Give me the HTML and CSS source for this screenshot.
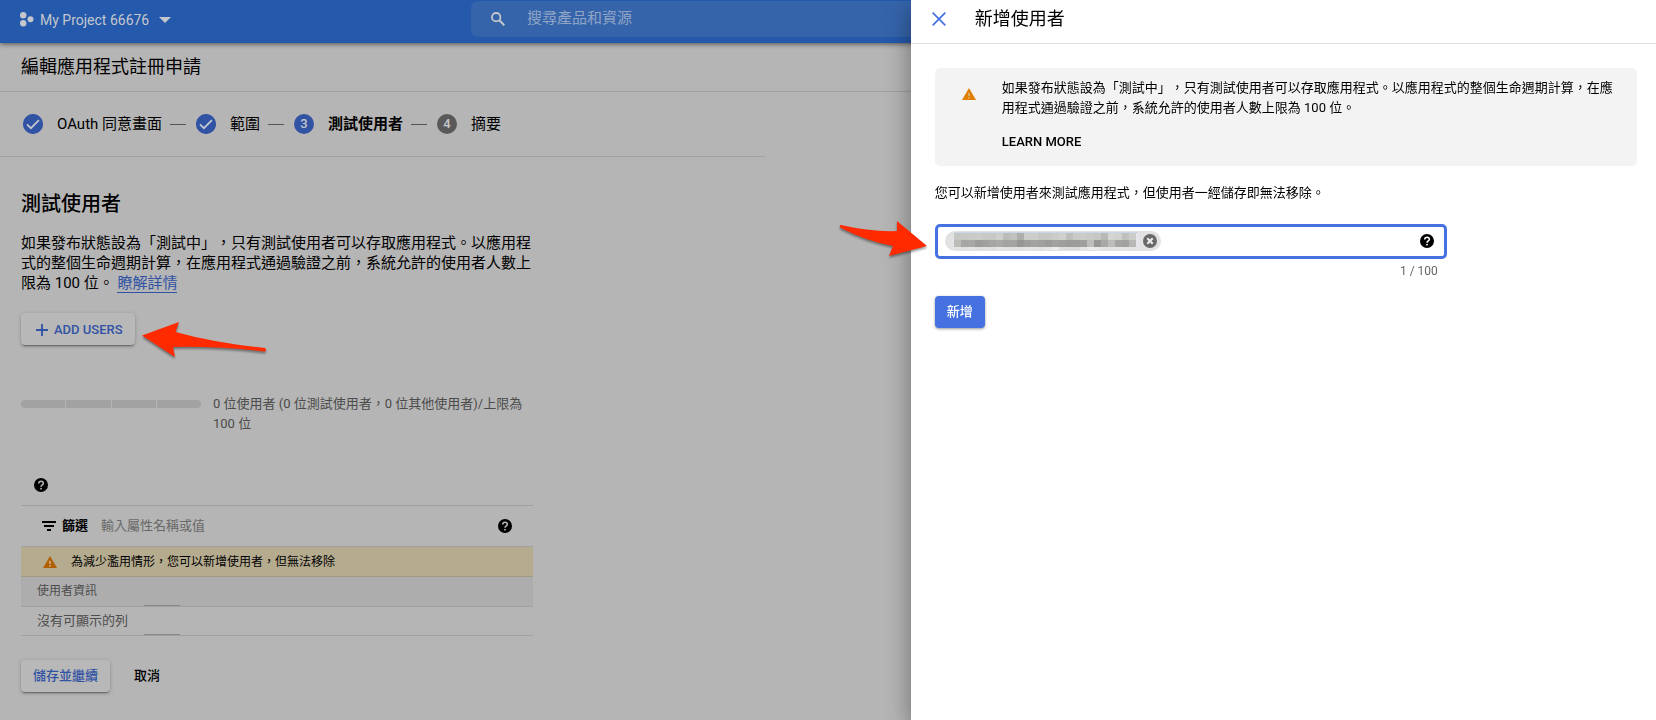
FILE: index.html
```html
<!DOCTYPE html>
<html lang="zh-Hant">
<head>
<meta charset="utf-8">
<meta name="viewport" content="width=device-width, initial-scale=1">
<title>編輯應用程式註冊申請</title>
<link rel="stylesheet" href="styles.css">
</head>
<body>
<svg class="defs" aria-hidden="true">
  <symbol id="help" viewBox="0 0 14 14"><circle cx="7" cy="7" r="7" fill="#000"/><path d="M4.700 5.500C4.700 4 5.700 3.300 7 3.300S9.300 4.100 9.300 5.400C9.300 6.900 7 7 7 8.800" fill="none" stroke="currentColor" stroke-width="1.600"/><rect x="6.200" y="9.900" width="1.600" height="1.600" fill="currentColor"/></symbol>
  <symbol id="warn" viewBox="0 0 14 12"><path d="M7 0 14 12H0z" fill="currentColor"/><path d="M7 4.800v3.200M7 9v1.400" class="warn-mark" stroke-width="1.300"/></symbol>
  <symbol id="check" viewBox="0 0 20 20"><circle cx="10" cy="10" r="10" fill="#3153a4"/><path d="m4 10.300 3.900 3.900 8-8" fill="none" stroke="#c4c8d2" stroke-width="1.700"/></symbol>
</svg>

<header class="topbar">
  <button class="project" type="button">
    <svg width="14" height="15" viewBox="0 0 14 15" fill="currentColor"><circle cx="3.200" cy="3.200" r="3.200"/><circle cx="3.200" cy="11.300" r="3.200"/><circle cx="10.500" cy="7.300" r="3"/></svg>
    <span>My Project 66676</span>
    <svg class="caret" width="12" height="6" viewBox="0 0 12 6" fill="currentColor"><path d="M0 0h12L6 6z"/></svg>
  </button>
  <label class="search">
    <svg width="14" height="14" viewBox="0 0 14 14" fill="none" stroke="currentColor"><circle cx="5.200" cy="5.200" r="4.200" stroke-width="1.800"/><path d="m8.300 8.300 5 5" stroke-width="2"/></svg>
    <input type="search" placeholder="搜尋產品和資源" aria-label="搜尋產品和資源">
  </label>
</header>

<main>
  <div class="page-title"><h1>編輯應用程式註冊申請</h1></div>
  <ol class="stepper">
    <li><svg class="dot"><use href="#check"/></svg><span>OAuth 同意畫面</span></li>
    <li><svg class="dot"><use href="#check"/></svg><span>範圍</span></li>
    <li class="current" aria-current="step"><b class="dot">3</b><span>測試使用者</span></li>
    <li class="next"><b class="dot">4</b><span>摘要</span></li>
  </ol>

  <section class="content">
    <h2>測試使用者</h2>
    <p class="intro">如果發布狀態設為「測試中」，只有測試使用者可以存取應用程式。以應用程式的整個生命週期計算，在應用程式通過驗證之前，系統允許的使用者人數上限為 100 位。 <a href="#details">瞭解詳情</a></p>
    <div class="anchor">
      <button class="raised add-users" type="button">
        <svg width="12" height="12" viewBox="0 0 12 12" stroke="currentColor" stroke-width="1.800"><path d="M6 0v12M0 6h12"/></svg>ADD USERS
      </button>
      <svg class="arrow arrow-left" width="130" height="40" viewBox="0 0 130 40" aria-hidden="true"><path d="M2 15.500 39 2 35.500 12Q75 23 125 28Q127 29.500 125 31.500Q75 26 33 27L35 37Z"/></svg>
    </div>

    <div class="quota">
      <div class="meter" role="img" aria-label="0 / 100"><i></i><i></i><i></i><i></i></div>
      <p>0 位使用者 (0 位測試使用者，0 位其他使用者)/上限為 100 位</p>
    </div>

    <div class="table-tools"><button class="icon" type="button" aria-label="說明"><svg width="14" height="14"><use href="#help"/></svg></button></div>
    <div class="filter">
      <svg width="14" height="10" viewBox="0 0 14 10" stroke="currentColor" stroke-width="1.800"><path d="M0 1h14M2 5h10M5 9h4"/></svg>
      <label for="filter">篩選</label>
      <input id="filter" type="text" placeholder="輸入屬性名稱或值">
      <button class="icon" type="button" aria-label="說明"><svg width="14" height="14"><use href="#help"/></svg></button>
    </div>
    <div class="notice"><svg width="14" height="12"><use href="#warn"/></svg>為減少濫用情形，您可以新增使用者，但無法移除</div>
    <table>
      <thead><tr><th scope="col">使用者資訊</th></tr></thead>
      <tbody><tr><td>沒有可顯示的列</td></tr></tbody>
    </table>
    <div class="actions">
      <button class="raised" type="button">儲存並繼續</button>
      <button class="plain" type="button">取消</button>
    </div>
  </section>
</main>

<aside class="drawer" aria-labelledby="drawer-title">
  <header>
    <button class="icon close" type="button" aria-label="關閉"><svg width="14" height="14" viewBox="0 0 14 14" stroke="currentColor" stroke-width="1.700"><path d="m.7.7 12.600 12.600M13.300.7.7 13.300"/></svg></button>
    <h2 id="drawer-title">新增使用者</h2>
  </header>
  <div class="drawer-body">
    <div class="info">
      <svg width="14" height="12"><use href="#warn"/></svg>
      <div>
        <p>如果發布狀態設為「測試中」，只有測試使用者可以存取應用程式。以應用程式的整個生命週期計算，在應用程式通過驗證之前，系統允許的使用者人數上限為 100 位。</p>
        <a href="#learn">LEARN MORE</a>
      </div>
    </div>
    <p class="hint">您可以新增使用者來測試應用程式，但使用者一經儲存即無法移除。</p>
    <div class="field-group">
      <div class="field">
        <span class="chip">
          <svg class="mosaic" id="mosaic" width="186" height="20" viewBox="0 0 186 20" shape-rendering="crispEdges" role="img" aria-label="使用者"></svg>
          <button class="icon" type="button" aria-label="移除"><svg width="14" height="14" viewBox="0 0 14 14"><circle cx="7" cy="7" r="7" fill="#696969"/><path d="m4.300 4.300 5.400 5.400m0-5.400L4.300 9.700" stroke="#eee" stroke-width="2"/></svg></button>
        </span>
        <input type="email" aria-label="新增使用者">
        <button class="icon help" type="button" aria-label="說明"><svg width="14" height="14"><use href="#help"/></svg></button>
      </div>
      <svg class="arrow arrow-right" width="94" height="44" viewBox="0 0 94 44" aria-hidden="true"><path d="M4 5Q3 7 5 8Q30 21 57 26L53 36 91 26 61 1 61 11Q35 12 5 5Z"/></svg>
      <div class="count">1 / 100</div>
    </div>
    <button class="primary" type="button">新增</button>
  </div>
</aside>
<script src="mosaic.js"></script>
</body>
</html>
```
FILE: styles.css
```css
* { box-sizing: border-box; }
body {
  margin: 0;
  min-height: 100vh;
  overflow: hidden;
  background: #b5b5b5;
  color: #000;
  font: 13px/20px Roboto, "Noto Sans CJK TC", sans-serif;
  text-spacing-trim: space-all;
}
h1, h2, p, ol { margin: 0; padding: 0; font-weight: 400; }
button, input { font: inherit; color: inherit; border: 0; background: none; padding: 0; margin: 0; }
input { outline: 0; min-width: 0; flex: 1; }
input::-webkit-search-cancel-button { display: none; }
svg { display: block; flex: none; }
button { display: flex; align-items: center; }
.defs { display: none; }
.icon { flex: none; color: #b5b5b5; }
.warn-mark { stroke: #d9c3a0; }

.topbar {
  display: grid;
  grid-template-columns: 471px 1fr;
  height: 43px;
  padding-bottom: 6px;
  background: #2459ab;
  box-shadow: 0 1px 5px rgba(0, 0, 0, .55);
  color: #c3c7cc;
}
.project { gap: 6px; padding-left: 20px; padding-top: 2px; font-size: 14px; }
.project .caret { margin-left: 4px; }
.search {
  display: flex;
  align-items: center;
  gap: 22px;
  margin-top: 1px;
  padding-left: 20px;
  border-radius: 7px;
  background: #3564ab;
  font-size: 15px;
}
.search input { padding-bottom: 2px; }
.search input::placeholder { color: #91a5c6; opacity: 1; }

.page-title { padding: 12px 21px; border-bottom: 1px solid #a0a0a0; }
.page-title h1 { font-size: 18px; line-height: 24px; }
.stepper {
  display: flex;
  align-items: center;
  width: 765px;
  max-width: 100%;
  height: 65px;
  padding-left: 23px;
  border-bottom: 1px solid #a0a0a0;
  list-style: none;
  font-size: 15px;
}
.stepper li { display: flex; align-items: center; gap: 14px; }
.stepper li + li::before { content: ""; width: 16px; height: 1px; margin: 0 -4px 0 8px; background: #555; }
.dot { width: 20px; height: 20px; border-radius: 50%; background: #3153a4; color: #c3c7cc; font-size: 13px; font-weight: 500; text-align: center; }
.current span { font-weight: 700; }
.next .dot { background: #595959; }

.content { width: 533px; max-width: 100%; padding: 33px 0 0 21px; }
.content h2 { font-size: 20px; line-height: 28px; font-weight: 500; }
.intro { margin-top: 15px; font-size: 15px; }
.intro a { color: #3153a4; text-decoration: none; border-bottom: 1px solid #3153a4; }
.anchor { position: relative; margin-top: 20px; }
.raised {
  height: 32px;
  padding: 0 12px;
  border-radius: 4px;
  background: #b8b8b8;
  box-shadow: 0 2px 2px -1px rgba(0, 0, 0, .4), 0 1px 4px rgba(0, 0, 0, .2);
  color: #3153a4;
  font-weight: 500;
}
.add-users { gap: 6px; padding: 1px 12px 0 15px; }
.arrow { position: absolute; fill: #ff2a00; filter: drop-shadow(0 2px 1px rgba(0, 0, 0, .4)); }
.arrow-left { left: 119px; top: 7px; }

.quota { display: flex; gap: 12px; margin-top: 49px; color: #4b4b4b; }
.meter { display: flex; flex: none; gap: 1px; width: 180px; height: 8px; margin-top: 6px; border-radius: 4px; overflow: hidden; }
.meter i { flex: 1; background: #a2a2a2; }
.table-tools { display: flex; margin-top: 24px; padding: 20px 13px 13px; }
.filter { display: flex; align-items: center; height: 42px; padding: 0 21px; border: solid #a0a0a0; border-width: 1px 0; }
.filter label { margin-left: 6px; font-weight: 700; }
.filter input { margin-left: 13px; }
.filter input::placeholder { color: #686868; opacity: 1; }
.notice { display: flex; align-items: center; gap: 14px; height: 30px; padding-left: 22px; background: #b5ab8f; border-bottom: 1px solid #a39b84; font-size: 12px; }
.notice svg { color: #b06000; }
table { width: 100%; border-collapse: collapse; color: #4d4d4d; text-align: left; }
th, td { height: 29px; padding: 0 16px; border-bottom: 1px solid #a0a0a0; font-weight: 400; background: linear-gradient(#8a8a8a, #8a8a8a) 123px 100% / 36px 1px no-repeat; }
th { background-color: #adadad; font-size: 12px; }
.actions { display: flex; gap: 24px; margin-top: 24px; }
.plain { font-weight: 500; }

.drawer {
  position: fixed;
  inset: 0 0 0 auto;
  width: 45%;
  background: #fff;
  box-shadow: 0 8px 24px rgba(0, 0, 0, .4);
}
.drawer > header { display: flex; align-items: center; gap: 29px; height: 44px; padding: 0 21px 6px; border-bottom: 1px solid #e0e0e0; }
.drawer h2 { font-size: 18px; line-height: 24px; }
.close { color: #4572e0; }
.drawer-body { padding: 24px 19px 24px 24px; }
.info { display: flex; gap: 26px; padding: 10px 20px 14px 27px; border-radius: 5px; background: #f3f3f3; }
.info > svg { margin-top: 10px; color: #e07f00; }
.info .warn-mark { stroke: #fff; }
.info a { display: inline-block; margin-top: 14px; color: #000; font-weight: 500; text-decoration: none; }
.hint { margin-top: 17px; }
.field-group { position: relative; width: 512px; max-width: 100%; margin-top: 21px; }
.field { display: flex; align-items: center; height: 35px; padding: 0 10px 1px 7px; border: 3px solid #4572e0; border-radius: 5px; }
.field .help { color: #fff; }
.chip { display: flex; align-items: center; gap: 4px; height: 20px; padding: 0 4px 0 8px; border-radius: 10px; background: #e2e2e2; }
.arrow-right { right: 100%; top: -4px; margin-right: 5px; }
.count { padding: 2px 9px 0; color: #666; font-size: 12px; text-align: right; }
.primary { height: 32px; margin-top: 15px; padding: 0 12px; border-radius: 4px; background: #4572e0; box-shadow: 0 1px 3px rgba(0, 0, 0, .4); color: #fff; font-weight: 500; }
```
FILE: mosaic.js
```js
// Fills the chip with a mosaic that hides the address.
const rows = [
  { y: 2, h: 7, tones: [198, 200, 202, 203, 200, 199, 206, 188, 193, 174, 204, 205, 198, 199, 203, 208, 189, 202, 204, 201, 199, 184, 212, 209, 192, 205] },
  { y: 9, h: 7, tones: [188, 165, 168, 157, 160, 166, 170, 163, 164, 150, 158, 163, 160, 155, 161, 159, 155, 157, 160, 190, 151, 168, 188, 164, 162, 184] },
  { y: 16, h: 3, tones: [228, 225, 229, 223, 226, 224, 230, 227, 224, 227, 230, 228, 226, 231, 236, 222, 221, 220, 229, 235, 232, 227, 226, 229, 230, 228] }
];
const svg = document.getElementById("mosaic");
const rect = (x, y, w, h, fill) => {
  const r = document.createElementNS("http://www.w3.org/2000/svg", "rect");
  Object.entries({ x, y, width: w, height: h, fill }).forEach(([k, v]) => r.setAttribute(k, v));
  svg.append(r);
};
rect(0, 1, 186, 18, "#e6e6ea");
rect(1, 1, 184, 1, "#cbd6ec");
rows.forEach(({ y, h, tones }) => tones.forEach((t, i) => rect(1 + i * 7, y, 7, h, `rgb(${t},${t},${t - (y === 16 ? -3 : 4)})`)));
```
